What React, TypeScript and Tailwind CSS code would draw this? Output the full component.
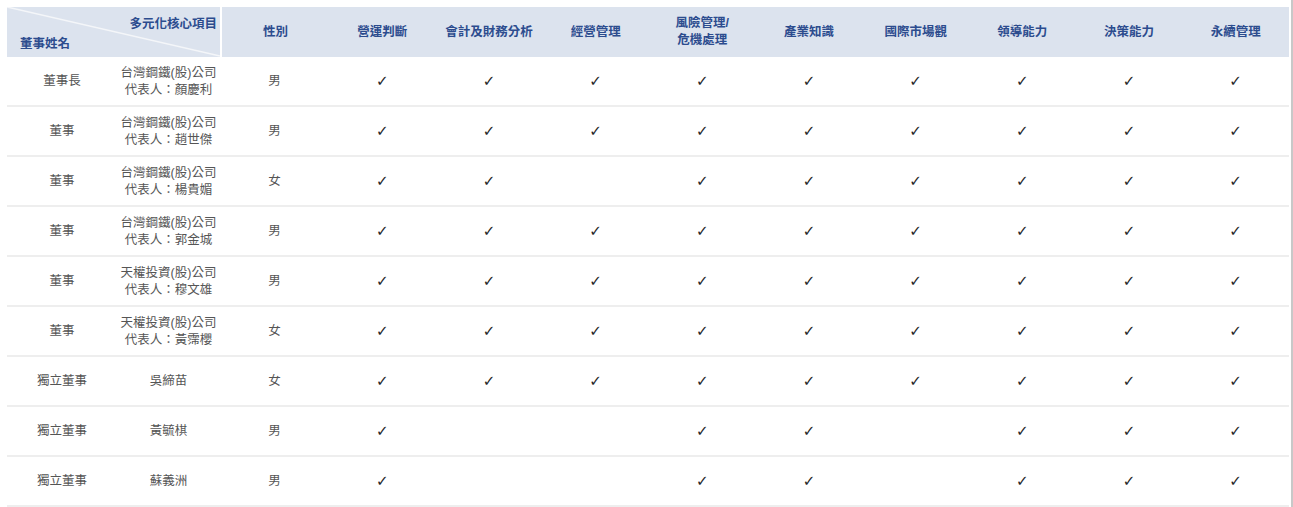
import React from "react";

const skills = [
  ["營運判斷"],
  ["會計及財務分析"],
  ["經營管理"],
  ["風險管理/", "危機處理"],
  ["產業知識"],
  ["國際市場觀"],
  ["領導能力"],
  ["決策能力"],
  ["永續管理"],
];

type Row = { title: string; company: string; rep?: string; gender: string; checks: number[] };

const all = [1, 1, 1, 1, 1, 1, 1, 1, 1];
const rows: Row[] = [
  { title: "董事長", company: "台灣鋼鐵(股)公司", rep: "代表人：顏慶利", gender: "男", checks: all },
  { title: "董事", company: "台灣鋼鐵(股)公司", rep: "代表人：趙世傑", gender: "男", checks: all },
  { title: "董事", company: "台灣鋼鐵(股)公司", rep: "代表人：楊貴媚", gender: "女", checks: [1, 1, 0, 1, 1, 1, 1, 1, 1] },
  { title: "董事", company: "台灣鋼鐵(股)公司", rep: "代表人：郭金城", gender: "男", checks: all },
  { title: "董事", company: "天權投資(股)公司", rep: "代表人：穆文雄", gender: "男", checks: all },
  { title: "董事", company: "天權投資(股)公司", rep: "代表人：黃霈櫻", gender: "女", checks: all },
  { title: "獨立董事", company: "吳締苗", gender: "女", checks: all },
  { title: "獨立董事", company: "黃毓棋", gender: "男", checks: [1, 0, 0, 1, 1, 0, 1, 1, 1] },
  { title: "獨立董事", company: "蘇義洲", gender: "男", checks: [1, 0, 0, 1, 1, 0, 1, 1, 1] },
];

const font = { fontFamily: '"Liberation Sans", "Noto Sans CJK TC", sans-serif' };

export default function App() {
  return (
    <div className="flex h-[507px] w-[1293px] bg-white overflow-hidden" style={font}>
      <div className="w-[1291px] pl-[7px] pt-[7px]">
        <div className="w-[1282px]">
          {/* header */}
          <div className="grid grid-cols-[213px_109px_repeat(9,minmax(0,1fr))] h-[50px] bg-[#dce3ee] text-[#2c4c8e] font-bold text-[12.5px]">
            <div className="relative">
              <svg className="absolute inset-0" width="213" height="50" viewBox="0 0 213 50">
                <line x1="0" y1="0" x2="213" y2="49" stroke="#f4f6f9" strokeWidth="1.5" />
              </svg>
              <div className="absolute right-[3px] top-[9px] leading-[16px]">多元化核心項目</div>
              <div className="absolute left-[13px] top-[29px] leading-[16px]">董事姓名</div>
            </div>
            <div className="border-l-2 border-white flex items-center justify-center">性別</div>
            {skills.map((s, i) => (
              <div key={i} className="flex flex-col items-center justify-center leading-[17px]">
                {s.map((t, j) => (
                  <span key={j}>{t}</span>
                ))}
              </div>
            ))}
          </div>
          {/* body */}
          {rows.map((r, i) => (
            <div
              key={i}
              className="grid grid-cols-[110px_103px_109px_repeat(9,minmax(0,1fr))] h-[50px] border-b-2 border-[#eeeeee] text-[#555555] text-[12.5px]"
            >
              <div className="flex items-center justify-center pt-[1px]">{r.title}</div>
              <div className="flex flex-col items-center justify-center leading-[17px] pt-[1px]">
                <span>{r.company}</span>
                {r.rep && <span>{r.rep}</span>}
              </div>
              <div className="flex items-center justify-center pt-[1px]">{r.gender}</div>
              {r.checks.map((c, j) => (
                <div
                  key={j}
                  className="flex items-center justify-center pt-[1px] text-[#262626] text-[15px] font-bold leading-none"
                  style={{ fontFamily: '"DejaVu Sans", sans-serif' }}
                >
                  {c ? "✓" : ""}
                </div>
              ))}
            </div>
          ))}
        </div>
      </div>
      <div className="w-[2px] bg-[#c8c8c8]" />
    </div>
  );
}
